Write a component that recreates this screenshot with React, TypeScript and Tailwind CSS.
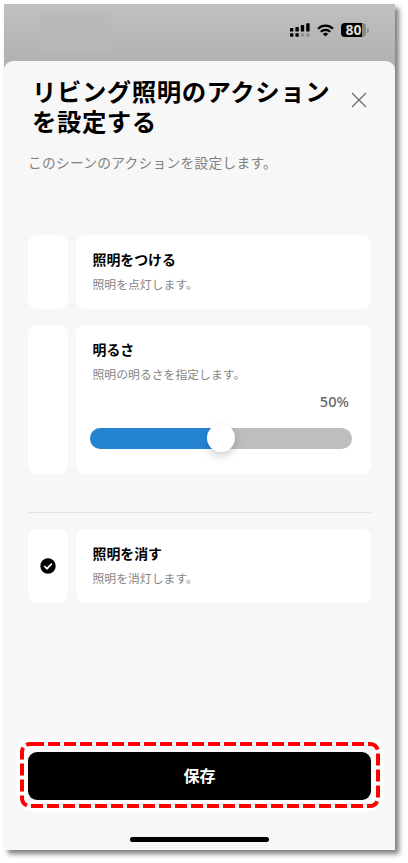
import { useState } from "react";
import type { ReactNode } from "react";

function StatusBar() {
  return (
    <div className="flex h-[57px] items-start justify-between pt-[9px] pr-[26px] pl-9">
      <div className="h-[39px] w-[71px] bg-[#b9b9b7]" />
      <div className="mt-[10px] flex h-[14px] items-center gap-[7px]">
        <svg width="20" height="14" viewBox="0 0 20 14">
          <rect x="0" y="5" width="3.4" height="3.6" rx="0.7" />
          <rect x="5.4" y="4" width="3.4" height="4.6" rx="0.7" />
          <rect x="10.8" y="2" width="3.4" height="6.6" rx="0.7" />
          <rect x="16.2" y="0.2" width="3.4" height="8.4" rx="0.7" />
          <rect x="0" y="10.2" width="3.4" height="3.6" rx="0.7" />
          <rect x="5.4" y="10.2" width="3.4" height="3.6" rx="0.7" />
          <rect x="10.8" y="10.2" width="3.4" height="3.6" rx="0.7" fill="#8f8f8f" />
          <rect x="16.2" y="10.2" width="3.4" height="3.6" rx="0.7" fill="#8f8f8f" />
        </svg>
        <svg width="17" height="13" viewBox="0 0 17 13" fill="none" stroke="#000" strokeWidth="2.2">
          <path d="M1 4.8C5.2 0.6 11.8 0.6 16 4.8" />
          <path d="M3.8 7.8C6.5 5.2 10.5 5.2 13.2 7.8" />
          <path d="M8.5 12.6L5.8 9.9C7.3 8.5 9.7 8.5 11.2 9.9Z" fill="#000" stroke="none" />
        </svg>
        <div className="flex items-center gap-px">
          <div className="flex h-[14px] w-[25px] items-center justify-center rounded-[4px] bg-[linear-gradient(90deg,#000_82%,#868686_82%)] font-['Noto_Sans'] text-[14px] leading-none font-bold text-[#dededc]">
            80
          </div>
          <div className="h-[5px] w-[2px] rounded-r-full bg-[#909090]" />
        </div>
      </div>
    </div>
  );
}

function ActionCard({
  title,
  description,
  selected = false,
  children,
}: {
  title: string;
  description: string;
  selected?: boolean;
  children?: ReactNode;
}) {
  return (
    <div className="flex gap-2">
      <div className="flex w-10 items-center justify-center rounded-[9px] bg-white">
        {selected && (
          <svg width="16" height="16" viewBox="0 0 16 16">
            <circle cx="8" cy="8" r="7.7" />
            <path d="M4.2 8L7 10.7L11.9 5.5" fill="none" stroke="#fff" strokeWidth="1.7" />
          </svg>
        )}
      </div>
      <div className="min-h-[74px] flex-1 rounded-[9px] bg-white pt-[14px] pl-4">
        <h2 className="pl-[0.5px] text-[13.9px] leading-5 font-bold text-black">{title}</h2>
        <p className="mt-[6px] pl-[0.5px] text-[11.85px] leading-[18px] text-[#858585]">{description}</p>
        {children}
      </div>
    </div>
  );
}

function BrightnessSlider({ value }: { value: number }) {
  return (
    <div className="-ml-[2px] w-[262px] pb-[25px]">
      <div className="mt-2 pr-[3px] text-right font-['Noto_Sans'] text-[14.6px] leading-5 font-medium text-[#686868]">
        {value}%
      </div>
      <div className="relative mt-[17px] h-[21px] rounded-full bg-[#bebebe]">
        <div className="h-full rounded-l-full bg-[#2484d2]" style={{ width: `${value}%` }} />
        <div
          className="absolute -top-[4px] size-7 -translate-x-1/2 rounded-full bg-white shadow-[0_4px_9px_rgba(0,0,0,0.18)]"
          style={{ left: `${value}%` }}
        />
      </div>
    </div>
  );
}

export default function App() {
  const [brightness] = useState(50);

  return (
    <div className="h-[863px] w-[408px] overflow-hidden bg-white pt-1 pl-1 font-['Noto_Sans_CJK_JP',sans-serif]">
      <div className="flex h-[846px] w-[391px] flex-col bg-linear-to-b from-[#c0c0be] to-[#b1b3b0] to-[58px] shadow-[4px_4px_5px_rgba(0,0,0,0.5)]">
        <StatusBar />
        <main className="flex flex-1 flex-col rounded-t-[9px] bg-[#f7f7f7] px-6">
          <div className="flex justify-between pt-[15px] pl-1">
            <h1 className="text-[24.4px] leading-[30px] font-bold tracking-[0.55px] text-black">
              リビング照明のアクション
              <br />
              を設定する
            </h1>
            <button className="mt-4 mr-[4px] size-4 shrink-0" aria-label="閉じる">
              <svg width="16" height="16" viewBox="0 0 16 16" stroke="#6f6f6f" strokeWidth="1.4">
                <path d="M1 1L15 15M15 1L1 15" />
              </svg>
            </button>
          </div>
          <p className="mt-4 text-[13.7px] leading-5 tracking-[0.3px] text-[#808080]">
            このシーンのアクションを設定します。
          </p>

          <div className="mt-[63px] flex flex-col gap-4">
            <ActionCard title="照明をつける" description="照明を点灯します。" />
            <ActionCard title="明るさ" description="照明の明るさを指定します。">
              <BrightnessSlider value={brightness} />
            </ActionCard>
          </div>
          <hr className="mt-[38px] mb-4 border-[#e4e4e4]" />
          <ActionCard title="照明を消す" description="照明を消灯します。" selected />

          <div className="relative mt-auto mb-[37px]">
            {/* dashed callout around the save button */}
            <svg className="absolute -top-[14px] -left-[14px]" width="372" height="76" viewBox="-2 0 372 76" fill="none">
              <rect x="6" y="6" width="356" height="62" rx="8" stroke="#fff" strokeWidth="11" />
              <path
                d="M16 6H354A8 8 0 0 1 362 14V60A8 8 0 0 1 354 68H14A8 8 0 0 1 6 60V14A8 8 0 0 1 14 6H16"
                stroke="#f00"
                strokeWidth="4"
                strokeDasharray="12 4"
              />
            </svg>
            <button className="relative block h-12 w-[343px] rounded-[9px] bg-black pb-[2px] text-[16px] font-bold text-white">
              保存
            </button>
          </div>
          <div className="mb-2 h-[5px] w-[139px] self-center rounded-full bg-black" />
        </main>
      </div>
    </div>
  );
}
